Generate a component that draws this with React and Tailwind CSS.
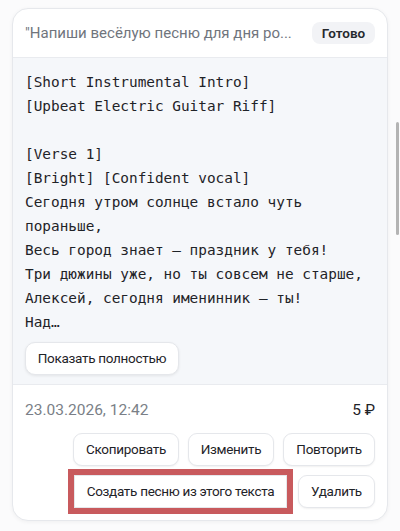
import React from 'react';

const lyrics = `[Short Instrumental Intro]
[Upbeat Electric Guitar Riff]

[Verse 1]
[Bright] [Confident vocal]
Сегодня утром солнце встало чуть пораньше,
Весь город знает — праздник у тебя!
Три дюжины уже, но ты совсем не старше,
Алексей, сегодня именинник — ты!
Над…`;

const Btn = ({ children, className = '' }) => (
  <button
    className={`h-[33px] bg-white border border-gray-200 rounded-[9px] shadow-[0_1px_2px_rgba(0,0,0,0.06)] text-[13.5px] tracking-[-0.3px] text-[#1f2328] whitespace-nowrap flex items-center justify-center ${className}`}>
    {children}
  </button>
);

function App() {
  return (
    <div
      className="min-h-[531px] bg-[#fbfbfc] pt-[8px] px-[12px] relative"
      style={{ fontFamily: 'Roboto, "Noto Sans", sans-serif' }}>
      <div className="w-[376px] bg-white border border-[#e6e8ec] rounded-[16px] shadow-[0_1px_4px_rgba(0,0,0,0.05)] overflow-hidden">
        {/* header */}
        <div className="h-[49px] flex items-center justify-between pl-[12px] pr-[12px] border-b border-[#e9ebef]">
          <span className="text-[15px] text-[#70757d] whitespace-nowrap overflow-hidden">"Напиши весёлую песню для дня ро...</span>
          <span className="shrink-0 ml-[10px] h-[22px] w-[63px] flex items-center justify-center bg-[#f2f3f6] rounded-[8px] text-[13.5px] font-semibold text-[#26292e]">
            Готово
          </span>
        </div>

        {/* lyrics */}
        <div className="bg-[#f5f7fa] px-[12px] pt-[12px] pb-[9px] border-b border-[#e9ebef]">
          <pre
            className="whitespace-pre-wrap text-[14.4px] leading-[24px] text-[#1f2328]"
            style={{ fontFamily: '"DejaVu Sans Mono", monospace' }}>
            {lyrics}
          </pre>
          <Btn className="mt-[8px] w-[154px] rounded-[10px] shadow-[0_1px_3px_rgba(0,0,0,0.08)]">Показать полностью</Btn>
        </div>

        {/* footer */}
        <div className="px-[12px] pt-[15px] pb-[12px]">
          <div className="flex items-center justify-between text-[15.5px] leading-[20px]">
            <span className="text-[#7a7f87]">23.03.2026, 12:42</span>
            <span className="text-[#1f2328]">5 ₽</span>
          </div>
          <div className="mt-[13px] flex flex-col items-end gap-[9px]">
            <div className="flex gap-[9px]">
              <Btn className="w-[106px]">Скопировать</Btn>
              <Btn className="w-[86px]">Изменить</Btn>
              <Btn className="w-[92px]">Повторить</Btn>
            </div>
            <div className="flex gap-[11px]">
              <Btn className="w-[213px] rounded-none outline-[6px] outline-solid outline-[#c85a5d]">Создать песню из этого текста</Btn>
              <Btn className="w-[77px]">Удалить</Btn>
            </div>
          </div>
        </div>
      </div>

      {/* scrollbar thumb */}
      <div className="absolute right-[1px] top-[122px] w-[3px] h-[113px] bg-[#b4b4b4] rounded-full" />
    </div>
  );
}

export default App;
